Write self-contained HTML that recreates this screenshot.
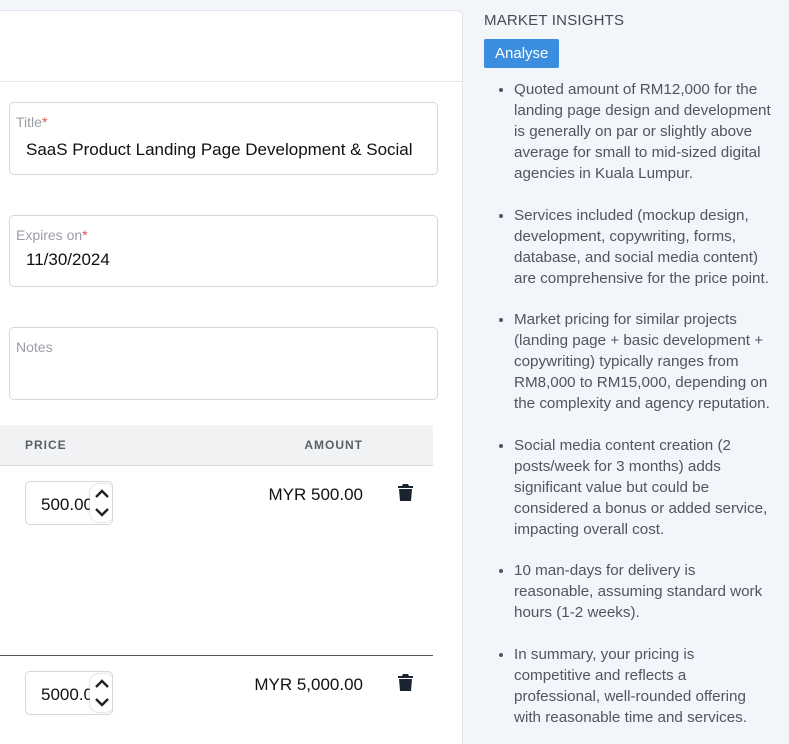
<!DOCTYPE html>
<html><head><meta charset="utf-8"><style>
*{box-sizing:border-box;margin:0;padding:0}
html{overflow:hidden;height:744px}
body{width:789px;height:744px;overflow:hidden;background:#f2f5fa;font-family:"Liberation Sans",sans-serif;position:relative}
.card{position:absolute;left:-10px;top:10px;width:473px;height:745px;background:#fff;border:1px solid #e3e6ea;border-radius:6px}
.hdr{position:absolute;left:0;top:81px;width:462px;height:1px;background:#e3e6ea}
.fld{position:absolute;left:9px;width:429px;border:1px solid #d4d7dc;border-radius:5px;background:#fff}
.lab{position:absolute;left:6px;top:11px;font-size:14px;color:#9a9ea5}
.lab b{color:#d9534f;font-weight:normal}
.val{position:absolute;left:16px;top:37px;font-size:17px;color:#111}
.th{position:absolute;left:0;top:425px;width:433px;height:41px;background:#f1f2f4;border-bottom:1px solid #d6d8dc;font-size:12px;font-weight:bold;color:#5b6068;letter-spacing:1px}
.num{position:absolute;left:25px;width:88px;height:44px;border:1px solid #d4d7dc;border-radius:5px;font-size:17px;color:#111;padding:13px 0 0 15px;overflow:hidden;white-space:nowrap}
.spin{position:absolute;left:64px;top:2px;width:24px;height:38px;background:#fff;border-radius:9px;box-shadow:0 0 2px #bbb}
.amt{position:absolute;right:426px;font-size:17px;color:#111}
.trash{position:absolute;left:398px}
.side{position:absolute;left:484px;top:12px;width:290px}
h3{font-size:15px;font-weight:normal;color:#444b55;letter-spacing:.2px}
.btn{display:inline-block;margin-top:10px;background:#3a8ddf;color:#fff;font-size:15px;padding:6px 11px;border-radius:2px}
ul{margin-top:11px;padding-left:30px;font-size:15.2px;line-height:21px;color:#4f5661}
li{margin-bottom:20.5px}
</style></head><body>
<div class="card"></div>
<div class="hdr"></div>
<div class="fld" style="top:102px;height:73px"><div class="lab">Title<b>*</b></div><div class="val" style="top:37px">SaaS Product Landing Page Development &amp; Social</div></div>
<div class="fld" style="top:215px;height:72px"><div class="lab">Expires on<b>*</b></div><div class="val" style="top:34px">11/30/2024</div></div>
<div class="fld" style="top:327px;height:73px"><div class="lab">Notes</div></div>
<div class="th"><span style="position:absolute;left:25px;top:13px">PRICE</span><span style="position:absolute;right:70px;top:13px">AMOUNT</span></div>
<div class="num" style="top:481px">500.00<div class="spin"><svg width="24" height="38" viewBox="0 0 24 38"><path d="M6 13l6-6 6 6M6 25l6 6 6-6" fill="none" stroke="#222" stroke-width="2.4"/></svg></div></div>
<div class="amt" style="top:485px">MYR 500.00</div>
<svg class="trash" style="top:484px" width="15" height="18" viewBox="0 0 15 18"><path d="M5 0h5l1 2h4v2H0V2h4z M1 5h13l-1 12H2z" fill="#1c2330"/></svg>
<div style="position:absolute;left:0;top:655px;width:433px;height:1px;background:#555"></div>
<div class="num" style="top:671px">5000.00<div class="spin"><svg width="24" height="38" viewBox="0 0 24 38"><path d="M6 13l6-6 6 6M6 25l6 6 6-6" fill="none" stroke="#222" stroke-width="2.4"/></svg></div></div>
<div class="amt" style="top:675px">MYR 5,000.00</div>
<svg class="trash" style="top:674px" width="15" height="18" viewBox="0 0 15 18"><path d="M5 0h5l1 2h4v2H0V2h4z M1 5h13l-1 12H2z" fill="#1c2330"/></svg>
<div class="side">
<h3>MARKET INSIGHTS</h3>
<div class="btn">Analyse</div>
<ul>
<li>Quoted amount of RM12,000 for the landing page design and development is generally on par or slightly above average for small to mid-sized digital agencies in Kuala Lumpur.</li>
<li>Services included (mockup design, development, copywriting, forms, database, and social media content) are comprehensive for the price point.</li>
<li>Market pricing for similar projects (landing page + basic development + copywriting) typically ranges from RM8,000 to RM15,000, depending on the complexity and agency reputation.</li>
<li>Social media content creation (2 posts/week for 3 months) adds significant value but could be considered a bonus or added service, impacting overall cost.</li>
<li>10 man-days for delivery is reasonable, assuming standard work hours (1-2 weeks).</li>
<li>In summary, your pricing is competitive and reflects a professional, well-rounded offering with reasonable time and services.</li>
</ul>
</div>
</body></html>
